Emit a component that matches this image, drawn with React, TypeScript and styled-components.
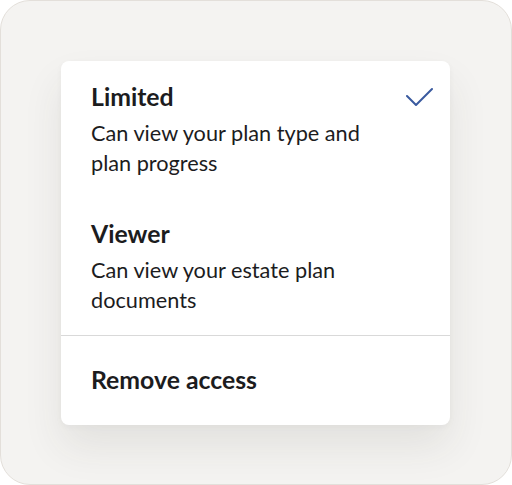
import React from "react";
import styled, { createGlobalStyle } from "styled-components";

type Role = {
  id: string;
  title: string;
  description: string;
};

const roles: Role[] = [
  { id: "limited", title: "Limited", description: "Can view your plan type and plan progress" },
  { id: "viewer", title: "Viewer", description: "Can view your estate plan documents" },
];

const CheckIcon = () => (
  <svg width="28" height="20" viewBox="0 0 28 20" fill="none">
    <polyline
      points="2,9 11,18 27,2"
      stroke="#3a5a9f"
      strokeWidth="2"
      strokeLinecap="round"
      strokeLinejoin="round"
    />
  </svg>
);

const App: React.FC = () => {
  const selected = "limited";

  return (
    <>
      <GlobalStyle />
      <Frame>
        <Menu>
          {roles.map((role) => (
            <Option key={role.id}>
              <OptionHeader>
                <Title>{role.title}</Title>
                {role.id === selected && (
                  <CheckWrap>
                    <CheckIcon />
                  </CheckWrap>
                )}
              </OptionHeader>
              <Description>{role.description}</Description>
            </Option>
          ))}
          <Divider />
          <RemoveButton>Remove access</RemoveButton>
        </Menu>
      </Frame>
    </>
  );
};

export default App;

const GlobalStyle = createGlobalStyle`
  body {
    margin: 0;
    background: #ffffff;
    font-family: Lato, "Open Sans", sans-serif;
  }
`;

const Frame = styled.div`
  box-sizing: border-box;
  width: 512px;
  height: 485px;
  border: 1px solid #e3dfda;
  border-radius: 30px;
  background: #f4f3f1;
  padding: 60px 61px 0 60px;
`;

const Menu = styled.div`
  width: 389px;
  background: #ffffff;
  border-radius: 8px;
  box-shadow: 0 22px 40px rgba(60, 50, 40, 0.09), 0 2px 6px rgba(60, 50, 40, 0.04);
  overflow: hidden;
`;

const Option = styled.div`
  padding: 21px 17px 20px 30px;
`;

const OptionHeader = styled.div`
  display: flex;
  align-items: center;
  justify-content: space-between;
  height: 30px;
`;

const Title = styled.span`
  font-size: 24.8px;
  font-weight: 700;
  line-height: 30px;
  color: #1c1c1e;
`;

const CheckWrap = styled.span`
  display: flex;
  margin-top: -1px;
`;

const Description = styled.p`
  margin: 6px 0 0;
  max-width: 295px;
  font-size: 21.7px;
  line-height: 30px;
  color: #1c1c1e;
`;

const Divider = styled.hr`
  margin: 0;
  border: none;
  border-top: 1px solid #d9d9d9;
`;

const RemoveButton = styled.button`
  display: block;
  width: 100%;
  padding: 29px 30px 30px;
  border: none;
  background: none;
  text-align: left;
  font-family: inherit;
  font-size: 24.8px;
  font-weight: 700;
  line-height: 30px;
  color: #1c1c1e;
  cursor: pointer;
`;
